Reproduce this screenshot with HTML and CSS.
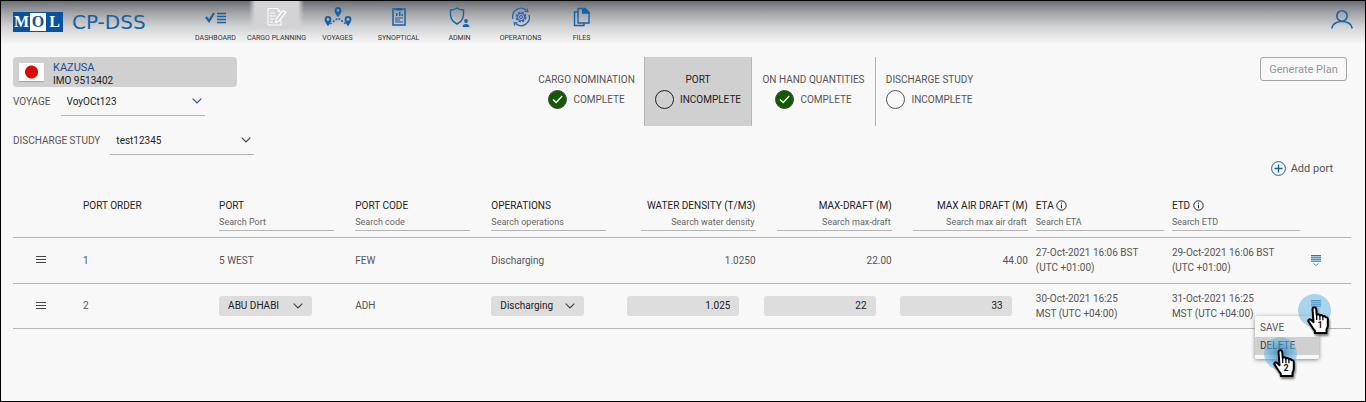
FILE: index.html
```html
<!DOCTYPE html>
<html lang="en">
<head>
<meta charset="utf-8">
<title>CP-DSS Discharge Study</title>
<link rel="stylesheet" href="styles.css">
</head>
<body>
<svg class="defs" aria-hidden="true">
  <symbol id="chevron" viewBox="0 0 10 6"><path d="M.7.7 5 5 9.300.7" fill="none" stroke="currentColor" stroke-width="1.2"/></symbol>
  <symbol id="info" viewBox="0 0 11 11"><circle cx="5.500" cy="5.500" r="4.700" fill="none" stroke="currentColor"/><path d="M5.500 4.700v3.500M5.500 2.500v1.200" stroke="currentColor"/></symbol>
  <symbol id="grip" viewBox="0 0 10 8"><path d="M0 .5h10M0 3.500h10M0 6.500h10" stroke="currentColor"/></symbol>
  <symbol id="done" viewBox="0 0 19 19"><circle cx="9.500" cy="9.500" r="9" fill="#145a05" stroke="#444"/><path d="m5 9.500 3.200 3 6-6.500" fill="none" stroke="#fff" stroke-width="1.300"/></symbol>
  <symbol id="open" viewBox="0 0 19 19"><circle cx="9.500" cy="9.500" r="9" fill="none" stroke="currentColor" stroke-width="1"/></symbol>
  <symbol id="rowmenu" viewBox="0 0 10 11"><path d="M0 0h10v1H0z" fill="#2377b8"/><path d="M0 2h10v1H0zM0 4h10v1H0zM0 6h10v1H0z" fill="#5a93c2"/><path d="M0 1h10v1H0zM0 3h10v1H0zM0 5h10v1H0z" fill="#a9c6de"/><path d="m2.500 8.500 2.500 2 2.500-2" fill="none" stroke="#4f90c5"/></symbol>
  <symbol id="hand" viewBox="0 0 22 29"><path d="M5.500 3c0-2.400 3.500-2.400 3.700 0l.5 6c.8-1.300 2.800-1 3.100.5.900-1 2.700-.6 3 .8.900-.8 2.400-.3 2.700 1 1.300-.4 2.300.3 2.300 1.800v7c0 1.600-1.300 2.600-1.300 4V27H7.800v-2.300c-2.500-2.700-4-6-6.200-9-1-1.700.8-3 2.300-1.900l2.600 2.400z" fill="#fff" stroke="#000" stroke-width="2" stroke-linejoin="round"/><path d="M9.700 9v5M12.900 9.800v4.400M15.900 10.800v3.400" stroke="#000" stroke-width="1.300"/></symbol>
</svg>

<header class="topbar">
  <a class="brand" href="#">
    <span class="mol"><span>M</span><span class="mol-mid">O</span><span>L</span></span>
    <span class="product">CP-DSS</span>
  </a>
  <nav class="nav">
    <a href="#"><svg width="22" height="20" viewBox="0 0 22 20"><path d="m1 10 3 4L9 6" fill="none" stroke="#1762a5" stroke-width="2.200"/><path d="M12 6.500h9M12 9.500h9M12 12.500h9M12 15.500h9" stroke="#1762a5" stroke-width="1.300"/></svg>DASHBOARD</a>
    <a href="#" class="active"><svg width="20" height="20" viewBox="0 0 20 20" fill="none" stroke="#fff"><path d="M13 4 10.500 1.500H1V18h13v-5M14 5.500V5l-3-.500v-3M3 6h5M3 9h6M3 12h4M3 15h3"/><path d="m9 12 7-8.500 3 2L12 14l-3.500 1.500z" stroke-width="1.200"/></svg>CARGO PLANNING</a>
    <a href="#"><svg width="28" height="20" viewBox="0 0 28 20"><g fill="#1762a5"><path fill-rule="evenodd" d="M14 0a3.400 3.400 0 0 1 3.400 3.400C17.400 6 14 10 14 10s-3.400-4-3.400-6.600A3.400 3.400 0 0 1 14 0zm0 2a1.400 1.400 0 1 0 0 2.800A1.400 1.400 0 0 0 14 2zM4 9a3.400 3.400 0 0 1 3.400 3.400C7.400 15 4 19 4 19S.6 15 .6 12.400A3.400 3.400 0 0 1 4 9zm0 2a1.400 1.400 0 1 0 0 2.800A1.400 1.400 0 0 0 4 11zM24 9a3.400 3.400 0 0 1 3.400 3.400C27.400 15 24 19 24 19s-3.400-4-3.400-6.600A3.400 3.400 0 0 1 24 9zm0 2a1.400 1.400 0 1 0 0 2.800 1.400 1.400 0 0 0 0-2.800z"/></g><path d="m6 17 8-6 8 6" fill="none" stroke="#1762a5" stroke-width="1.500" stroke-dasharray="2 1.500"/></svg>VOYAGES</a>
    <a href="#"><svg width="14" height="20" viewBox="0 0 14 20"><path d="M1 2h12v16H1z" fill="none" stroke="#1762a5" stroke-width="1.500"/><path d="M4 1h6v2.500H4zM4 6h1.500v3H4zM7 5h1.500v4H7zM9.500 7H11v2H9.500z" fill="#1762a5"/><path d="M3 11h8M3 13h5M3 15h8" stroke="#1762a5"/></svg>SYNOPTICAL</a>
    <a href="#"><svg width="21" height="20" viewBox="0 0 21 20"><path d="M8 1c2 1.500 4 2 6.500 2C15 10 14 14 8 17 2 14 1 10 1.500 3 4 3 6 2.500 8 1z" fill="none" stroke="#1762a5" stroke-width="1.400"/><circle cx="17" cy="14" r="1.900" fill="#1762a5"/><path d="M13.500 20c0-4 7-4 7 0z" fill="#1762a5"/></svg>ADMIN</a>
    <a href="#"><svg width="20" height="20" viewBox="0 0 20 20" fill="none" stroke="#2d62ae"><path d="M2 12A8.300 8.300 0 0 1 15.500 3.500M18 8A8.300 8.300 0 0 1 4.500 16.500" stroke-width="1.300"/><path d="m13.500 4.300 3.300.2-.5-3M6.500 15.800l-3.300-.2.500 3" stroke-width="1.200"/><circle cx="10" cy="10" r="4.400" stroke-width="2" stroke-dasharray="2.300 1.150"/><circle cx="10" cy="10" r="3.500"/><circle cx="10" cy="10" r="1.500"/></svg>OPERATIONS</a>
    <a href="#"><svg width="18" height="20" viewBox="0 0 18 20"><path d="M5 5H1.500v13.500h9.500V16" fill="none" stroke="#1762a5" stroke-width="1.400"/><path d="M5 1.500h7l4 4V16H5z" fill="none" stroke="#1762a5" stroke-width="1.400"/><path d="M9 1h3.500L17 5.500v1.200H9z" fill="#1762a5"/></svg>FILES</a>
  </nav>
  <button class="user" aria-label="Account"><svg width="22" height="19" viewBox="0 0 22 19" fill="none" stroke="#1762a5" stroke-width="1.600"><circle cx="11" cy="6" r="5.200"/><path d="M1 18.500v-1C2 9.500 20 9.500 21 17.500v1"/></svg></button>
</header>

<main>
  <section class="summary">
    <div class="context">
      <div class="ship">
        <span class="flag" role="img" aria-label="Japan"></span>
        <div><div class="ship-name">KAZUSA</div><div class="ship-imo">IMO 9513402</div></div>
      </div>
      <div class="field voyage">
        <label for="voyage">VOYAGE</label>
        <span class="pick"><select id="voyage"><option>VoyOCt123</option></select><svg class="chev blue"><use href="#chevron"/></svg></span>
      </div>
      <div class="field">
        <label for="study">DISCHARGE STUDY</label>
        <span class="pick"><select id="study"><option>test12345</option></select><svg class="chev"><use href="#chevron"/></svg></span>
      </div>
    </div>
    <ol class="steps">
      <li><span>CARGO NOMINATION</span><span class="state"><svg><use href="#done"/></svg>COMPLETE</span></li>
      <li class="current"><span>PORT</span><span class="state"><svg><use href="#open"/></svg>INCOMPLETE</span></li>
      <li><span>ON HAND QUANTITIES</span><span class="state"><svg><use href="#done"/></svg>COMPLETE</span></li>
      <li class="last"><span>DISCHARGE STUDY</span><span class="state"><svg><use href="#open"/></svg>INCOMPLETE</span></li>
    </ol>
    <button class="generate" disabled>Generate Plan</button>
  </section>

  <div class="actions">
    <button class="add"><svg width="15" height="15" viewBox="0 0 15 15" fill="none" stroke="#1762a5"><circle cx="7.500" cy="7.500" r="6.900"/><path d="M7.500 3.500v8M3.500 7.500h8" stroke-width="1.400"/></svg>Add port</button>
  </div>

  <table class="ports">
    <colgroup><col class="c-grip"><col span="9"><col class="c-menu"></colgroup>
    <thead>
      <tr>
        <th></th>
        <th>PORT ORDER</th>
        <th>PORT<input class="search" placeholder="Search Port" aria-label="Search port"></th>
        <th>PORT CODE<input class="search" placeholder="Search code" aria-label="Search code"></th>
        <th>OPERATIONS<input class="search" placeholder="Search operations" aria-label="Search operations"></th>
        <th class="num">WATER DENSITY (T/M3)<input class="search" placeholder="Search water density" aria-label="Search water density"></th>
        <th class="num">MAX-DRAFT (M)<input class="search" placeholder="Search max-draft" aria-label="Search max-draft"></th>
        <th class="num">MAX AIR DRAFT (M)<input class="search" placeholder="Search max air draft" aria-label="Search max air draft"></th>
        <th>ETA <svg class="info"><use href="#info"/></svg><input class="search wide" placeholder="Search ETA" aria-label="Search ETA"></th>
        <th>ETD <svg class="info"><use href="#info"/></svg><input class="search wide" placeholder="Search ETD" aria-label="Search ETD"></th>
        <th></th>
      </tr>
    </thead>
    <tbody>
      <tr>
        <td class="grip"><svg><use href="#grip"/></svg></td>
        <td>1</td><td>5 WEST</td><td>FEW</td><td>Discharging</td>
        <td class="num">1.0250</td><td class="num">22.00</td><td class="num">44.00</td>
        <td>27-Oct-2021 16:06 BST<br>(UTC +01:00)</td><td>29-Oct-2021 16:06 BST<br>(UTC +01:00)</td>
        <td class="menu-cell"><button class="row-menu" aria-label="Row 1 actions"><svg><use href="#rowmenu"/></svg></button></td>
      </tr>
      <tr>
        <td class="grip"><svg><use href="#grip"/></svg></td>
        <td>2</td>
        <td><span class="pick filled"><select aria-label="Port"><option>ABU DHABI</option></select><svg class="chev"><use href="#chevron"/></svg></span></td>
        <td>ADH</td>
        <td><span class="pick filled"><select aria-label="Operation"><option>Discharging</option></select><svg class="chev"><use href="#chevron"/></svg></span></td>
        <td><input class="value" value="1.025" aria-label="Water density"></td>
        <td><input class="value" value="22" aria-label="Max draft"></td>
        <td><input class="value" value="33" aria-label="Max air draft"></td>
        <td>30-Oct-2021 16:25<br>MST (UTC +04:00)</td><td>31-Oct-2021 16:25<br>MST (UTC +04:00)</td>
        <td class="menu-cell">
          <button class="row-menu" aria-label="Row 2 actions"><svg><use href="#rowmenu"/></svg></button>
          <div class="menu"><button>SAVE</button><button class="hover">DELETE</button></div>
          <div class="marker first"><svg><use href="#hand"/></svg><b>1</b></div>
          <div class="marker second"><svg><use href="#hand"/></svg><b>2</b></div>
        </td>
      </tr>
    </tbody>
  </table>
</main>
</body>
</html>
```

FILE: styles.css
```css
* { box-sizing: border-box; }
body {
  margin: 0;
  min-height: 100vh;
  border: 1px solid #000;
  background: #f8f8f8;
  color: #555;
  font: 10px/15px Roboto, "Liberation Sans", sans-serif;
}
button, input, select { font: inherit; color: inherit; border: 0; background: none; padding: 0; margin: 0; border-radius: 0; }
select { appearance: none; }
a { text-decoration: none; color: inherit; }
.defs { position: absolute; width: 0; height: 0; }

.topbar {
  display: flex;
  align-items: flex-start;
  height: 42px;
  padding: 0 12px 0 12px;
  background: linear-gradient(#6c7076, #a5a7aa 30%, #d2d3d4 62%, #f6f6f6);
}
.brand { display: flex; align-items: center; gap: 9px; width: 172px; margin-top: 11px; }
.mol {
  display: grid;
  grid-template-columns: 17px 16px 17px;
  height: 20px;
  padding: 1px 0;
  background: #0a529d;
  color: #fff;
  font: bold 16px/18px "Liberation Serif", serif;
  text-align: center;
}
.mol-mid { background: #fff; color: #0a529d; }
.product { color: #1762a5; font: 20px/20px "DejaVu Sans", sans-serif; }
.nav { display: flex; }
.nav a {
  display: flex;
  flex-direction: column;
  align-items: center;
  gap: 6px;
  width: 61px;
  height: 42px;
  padding-top: 6px;
  color: #333;
  font-size: 7px;
  line-height: 10px;
  white-space: nowrap;
}
.nav .active { background: linear-gradient(90deg, transparent 3px, #d3d3d5 9px, #d3d3d5 52px, transparent 58px) no-repeat 0 0 / 100% 28px; }
.user { margin: 9px 0 0 auto; }
.user svg { display: block; }

main { padding: 14px 14px 0 12px; }
.summary { display: grid; grid-template-columns: 516px auto 1fr; align-items: start; height: 98px; }
.ship {
  display: flex;
  align-items: center;
  gap: 9px;
  width: 224px;
  height: 30px;
  padding: 0 6px;
  border-radius: 4px;
  background: #d0d0d0;
}
.flag { width: 25px; height: 18px; background: radial-gradient(circle, #dc0a00 6px, #fff 7px); box-shadow: 0 1px 1px #aaa; }
.ship-name { color: #1d4f91; font-size: 11px; line-height: 13px; padding-top: 3px; }
.ship-imo { color: #222; line-height: 13px; }
.field { display: flex; gap: 10px; align-items: center; height: 29px; }
.voyage { margin-bottom: 10px; }
.pick { display: grid; align-items: center; width: 144px; height: 29px; border-bottom: 1px solid #b5b5b5; color: #222; }
.pick select, .pick .chev { grid-area: 1 / 1; }
.pick select { width: 100%; height: 28px; padding: 0 24px 0 6px; }
.chev { width: 10px; height: 6px; justify-self: end; margin-right: 3px; color: #444; pointer-events: none; }
.blue { color: #1d4f91; }

.steps { display: grid; grid-template-columns: 115px 108px 123px 108px; height: 69px; margin: 0; padding: 0; list-style: none; }
.steps li { display: flex; flex-direction: column; align-items: center; gap: 3px; padding-top: 15px; white-space: nowrap; }
.steps .current { background: #d0d0d0; border: solid #b5b5b5; border-width: 0 1px; color: #222; }
.steps .last { border-left: 1px solid #b5b5b5; }
.state { display: flex; align-items: center; gap: 6px; }
.state svg { width: 19px; height: 19px; }
.generate { justify-self: end; width: 87px; height: 24px; margin-right: 4px; border: 1px solid #a2a5aa; border-radius: 3px; color: #92959a; font-size: 11px; }

.actions { display: flex; justify-content: flex-end; padding: 4px 18px 0 0; }
.add { display: flex; align-items: center; gap: 5px; height: 18px; font-size: 11px; }

.ports { width: 100%; margin-top: 17px; border-collapse: collapse; table-layout: fixed; }
.c-grip { width: 62px; }
.c-menu { width: 51px; }
th, td { padding: 0 0 0 8px; text-align: left; font-weight: normal; border-bottom: 1px solid #b5b5b5; white-space: nowrap; }
th { height: 43px; padding-top: 4px; vertical-align: top; color: #222; }
td { height: 45px; }
tbody tr:first-child td { height: 46px; }
.num { text-align: right; }
.search { display: block; width: 115px; height: 18px; border-bottom: 1px solid #b5b5b5; font-size: 9px; }
.search::placeholder { color: #666; opacity: 1; }
.num .search { margin-left: auto; text-align: right; padding-right: 1px; }
.search.wide { width: 128px; }
.info { width: 11px; height: 11px; vertical-align: -2px; }
.grip { padding-left: 23px; color: #444; }
.grip svg { display: block; width: 10px; height: 8px; }
.filled { width: 93px; height: 20px; border: 0; border-radius: 3px; background: #ddd; }
.filled select { height: 20px; padding-left: 9px; }
.filled .chev { margin-right: 9px; }
.value { display: block; width: 112px; height: 20px; padding: 0 9px; border-radius: 3px; background: #ddd; color: #222; text-align: right; }
.menu-cell { position: relative; padding-left: 11px; }
.row-menu { display: block; }
.row-menu svg { display: block; width: 10px; height: 11px; }
.menu { position: absolute; top: 32px; right: 32px; width: 64px; padding: 3px 0 4px; border-radius: 2px; background: #f8f8f8; box-shadow: 0 1px 4px #888; }
.menu button { display: block; width: 100%; height: 18px; padding-left: 5px; text-align: left; }
.menu .hover { background: #d0d0d0; color: #333; }
.marker { position: absolute; width: 33px; height: 33px; border-radius: 50%; background: radial-gradient(#2588c8aa 20%, #65b4e088 65%); }
.first { top: 10px; left: -2px; background: #65b4e088; }
.second { top: 53px; left: -36px; }
.marker svg { position: absolute; top: 12px; left: 9px; width: 22px; height: 29px; filter: drop-shadow(1px 2px 1px #777); }
.marker b { position: absolute; top: 25px; left: 17px; width: 10px; color: #111; font-size: 9px; line-height: 12px; text-align: center; }
```
